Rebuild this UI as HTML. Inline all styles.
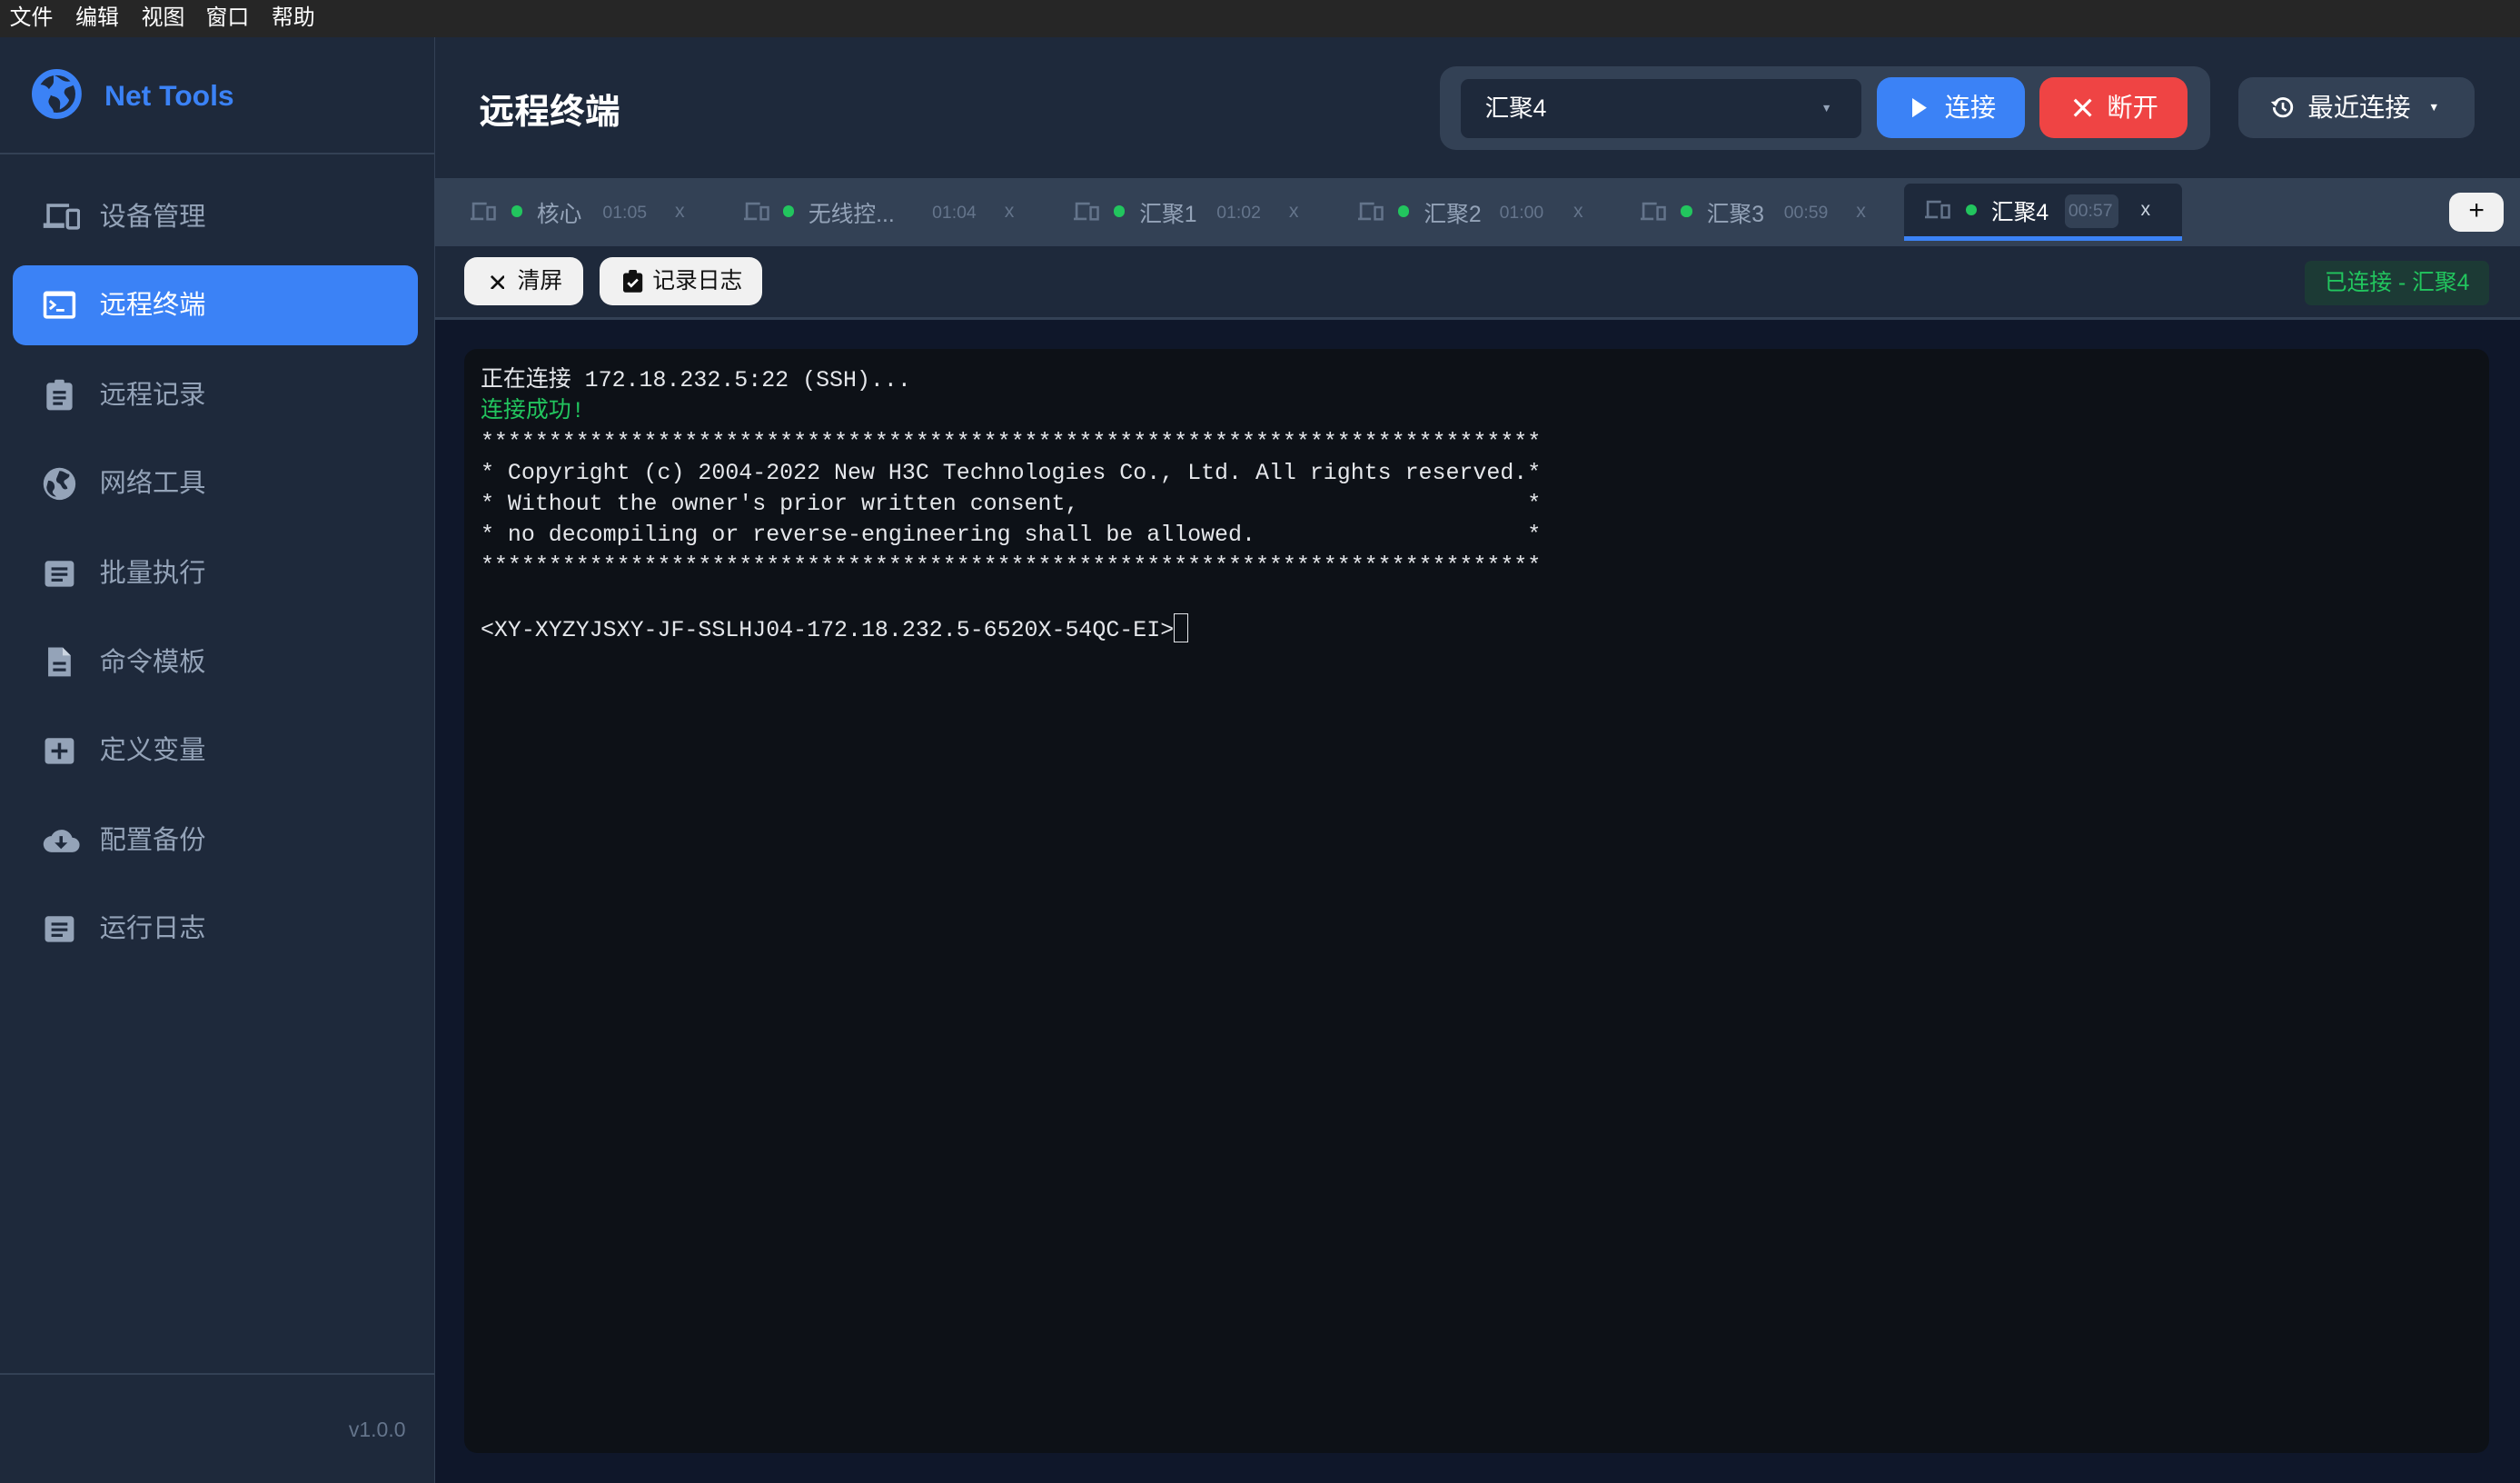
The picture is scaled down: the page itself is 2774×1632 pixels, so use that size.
<!DOCTYPE html>
<html><head><meta charset="utf-8"><style>
html,body{margin:0;padding:0;background:#1e293b;overflow:hidden}
body{width:2774px;height:1632px}
#r{zoom:1.7691;position:relative;width:1568px;height:922.5px;font-family:"Liberation Sans","Noto Sans CJK SC",sans-serif;overflow:hidden;background:#1e293b}
.a{position:absolute}
.menu{left:0;top:0;width:1568px;height:23px;background:#262626;color:#fff;font-size:13.5px;line-height:23px}
.menu span{position:absolute;top:0}
.side{left:0;top:23px;width:270px;height:900px;background:#1e293b;border-right:1px solid #334155}
.nav{position:absolute;left:8px;width:252px;height:50px;border-radius:8px;color:#94a3b8;font-size:16.5px}
.nav .t{position:absolute;left:54px;top:0;line-height:50px}
.nav svg{position:absolute;left:18px;top:14px}
.nav.on{background:#3b82f6;color:#fff}
.dot{width:7px;height:7px;border-radius:50%;background:#22c55e}
.term{font-family:"Liberation Mono","Noto Sans CJK SC",monospace;font-size:14.1px;line-height:19.3px;color:#e5e7eb;white-space:pre}
</style></head><body><div id="r">
<div class="a menu"><span style="left:6px">文件</span><span style="left:47px">编辑</span><span style="left:88px">视图</span><span style="left:128px">窗口</span><span style="left:169px">帮助</span></div>

<div class="a side">
 <div class="a" style="left:0;top:72px;width:270px;height:1px;background:#334155"></div>
 <svg class="a" style="left:20px;top:20px" width="31" height="31" viewBox="0 0 32 32"><circle cx="16" cy="16" r="14" fill="none" stroke="#3b82f6" stroke-width="4"/><path d="M5 10c4 0 6 2 7 5s-2 4-1 7 3 3 3 6c-5-1-10-5-11-11 0-3 1-5 2-7zM14 4c4 1 5 4 9 4 2 0 4-1 5 1-2 3-6 2-7 5-1 2 2 4 3 6-1 3-4 5-6 6 0-3 1-5-1-7s-5-1-6-4 3-4 3-7z" fill="#3b82f6"/></svg>
 <div class="a" style="left:65px;top:26px;font-size:18px;color:#3b82f6;font-weight:bold">Net Tools</div>
 <div class="a" style="left:0;top:831px;width:270px;height:1px;background:#334155"></div>
 <div class="a" style="left:217px;top:859px;font-size:13px;color:#64748b">v1.0.0</div>
</div>

<div class="nav" style="top:110px"><svg width="24" height="22" viewBox="0 0 24 22"><path d="M3 3h14v2H5v10h9v3H1v-3h2z" fill="#94a3b8"/><rect x="16" y="7" width="7" height="11" rx="1" fill="none" stroke="#94a3b8" stroke-width="2"/></svg><span class="t">设备管理</span></div>
<div class="nav on" style="top:165px"><svg width="22" height="22" viewBox="0 0 22 22"><rect x="1" y="2" width="20" height="17" rx="2" fill="#fff"/><rect x="3" y="5" width="16" height="12" fill="#3b82f6"/><path d="M5 8l3 2.5L5 13" stroke="#fff" stroke-width="1.6" fill="none"/><rect x="9" y="13" width="5" height="1.6" fill="#fff"/></svg><span class="t">远程终端</span></div>
<div class="nav" style="top:221px"><svg width="22" height="22" viewBox="0 0 22 22"><rect x="3" y="3" width="16" height="17" rx="2" fill="#94a3b8"/><rect x="8" y="1" width="6" height="4" rx="1" fill="#94a3b8"/><rect x="7" y="8" width="8" height="1.8" fill="#1e293b"/><rect x="7" y="11.5" width="8" height="1.8" fill="#1e293b"/><rect x="7" y="15" width="6" height="1.8" fill="#1e293b"/></svg><span class="t">远程记录</span></div>
<div class="nav" style="top:276px"><svg width="22" height="22" viewBox="0 0 22 22"><circle cx="11" cy="11" r="10" fill="#94a3b8"/><path d="M4 9c3 0 4 2 4 4s-2 2-1 4l2 2c-3 0-6-3-6-6zM11 3c3 0 4 2 6 2 1 2-2 3-3 4-1 2 2 3 2 5-2 1-3 0-4-2s-3-1-3-4z" fill="#1e293b"/></svg><span class="t">网络工具</span></div>
<div class="nav" style="top:332px"><svg width="22" height="22" viewBox="0 0 22 22"><rect x="2" y="3" width="18" height="16" rx="2" fill="#94a3b8"/><rect x="6" y="7" width="10" height="1.8" fill="#1e293b"/><rect x="6" y="10.5" width="10" height="1.8" fill="#1e293b"/><rect x="6" y="14" width="7" height="1.8" fill="#1e293b"/></svg><span class="t">批量执行</span></div>
<div class="nav" style="top:387px"><svg width="22" height="22" viewBox="0 0 22 22"><path d="M4 2h9l5 5v13H4z" fill="#94a3b8"/><path d="M13 2v5h5" fill="#cbd5e1"/><rect x="7" y="11" width="8" height="1.8" fill="#1e293b"/><rect x="7" y="15" width="8" height="1.8" fill="#1e293b"/></svg><span class="t">命令模板</span></div>
<div class="nav" style="top:442px"><svg width="22" height="22" viewBox="0 0 22 22"><rect x="2" y="3" width="18" height="16" rx="2" fill="#94a3b8"/><rect x="6" y="10" width="10" height="2" fill="#1e293b"/><rect x="10" y="6" width="2" height="10" fill="#1e293b"/></svg><span class="t">定义变量</span></div>
<div class="nav" style="top:498px"><svg width="24" height="22" viewBox="0 0 24 22"><path d="M6 18a5 5 0 010-10 7 7 0 0113 1 4.5 4.5 0 010 9z" fill="#94a3b8"/><path d="M11 8h2v4h3l-4 4-4-4h3z" fill="#1e293b"/></svg><span class="t">配置备份</span></div>
<div class="nav" style="top:553px"><svg width="22" height="22" viewBox="0 0 22 22"><rect x="2" y="3" width="18" height="16" rx="2" fill="#94a3b8"/><rect x="6" y="7" width="10" height="1.8" fill="#1e293b"/><rect x="6" y="10.5" width="10" height="1.8" fill="#1e293b"/><rect x="6" y="14" width="7" height="1.8" fill="#1e293b"/></svg><span class="t">运行日志</span></div>

<!-- header -->
<div class="a" style="left:298px;top:52px;font-size:22px;font-weight:bold;color:#fff">远程终端</div>
<div class="a" style="left:896px;top:41px;width:479px;height:52px;background:#334155;border-radius:10px"></div>
<div class="a" style="left:909px;top:49px;width:249px;height:37px;background:#1e293b;border-radius:5px;color:#fff;font-size:15px;line-height:37px"><span style="margin-left:15px">汇聚4</span><span style="position:absolute;right:18px;top:0;font-size:7px;color:#94a3b8">▼</span></div>
<div class="a" style="left:1168px;top:48px;width:92px;height:38px;background:#3b82f6;border-radius:9px;color:#fff;font-size:16px;line-height:38px"><svg class="a" style="left:22px;top:13px" width="9" height="12"><path d="M0 0l9 6-9 6z" fill="#fff"/></svg><span style="position:absolute;left:42px">连接</span></div>
<div class="a" style="left:1269px;top:48px;width:92px;height:38px;background:#ef4444;border-radius:9px;color:#fff;font-size:16px;line-height:38px"><svg class="a" style="left:21px;top:13px" width="12" height="12"><path d="M1 1l10 10M11 1L1 11" stroke="#fff" stroke-width="1.8"/></svg><span style="position:absolute;left:42px">断开</span></div>
<div class="a" style="left:1393px;top:48px;width:147px;height:38px;background:#334155;border-radius:9px;color:#fff;font-size:16px;line-height:38px"><svg class="a" style="left:19px;top:11px" width="16" height="16" viewBox="0 0 16 16"><path d="M3 8a5.5 5.5 0 105.5-5.5A5.5 5.5 0 004 5" fill="none" stroke="#fff" stroke-width="1.6"/><path d="M1 4.5l3 3 2-3.5z" fill="#fff"/><path d="M8.5 5v3.5l2 1.5" fill="none" stroke="#fff" stroke-width="1.5"/></svg><span style="position:absolute;left:43px">最近连接</span><span style="position:absolute;left:118px;font-size:7px">▼</span></div>

<!-- tab bar -->
<div class="a" style="left:271px;top:111px;width:1297px;height:42px;background:#334155"></div>
<div class="a" style="left:1185px;top:114px;width:173px;height:33px;background:#1e293b;border-radius:4px 4px 0 0"></div>
<div class="a" style="left:1185px;top:147px;width:173px;height:3px;background:#3b82f6"></div>
<div class="a" style="left:1285px;top:121px;width:33px;height:21px;background:#334155;border-radius:4px"></div>

<svg class="a" style="left:293px;top:125px" width="16" height="13" viewBox="0 0 16 13"><path d="M1 1h9v1.5H2.5v8H8V12H0v-1.5h1z" fill="#64748b"/><rect x="10.5" y="4" width="4.5" height="7.5" fill="none" stroke="#64748b" stroke-width="1.4"/></svg>
<svg class="a" style="left:463px;top:125px" width="16" height="13" viewBox="0 0 16 13"><path d="M1 1h9v1.5H2.5v8H8V12H0v-1.5h1z" fill="#64748b"/><rect x="10.5" y="4" width="4.5" height="7.5" fill="none" stroke="#64748b" stroke-width="1.4"/></svg>
<svg class="a" style="left:668px;top:125px" width="16" height="13" viewBox="0 0 16 13"><path d="M1 1h9v1.5H2.5v8H8V12H0v-1.5h1z" fill="#64748b"/><rect x="10.5" y="4" width="4.5" height="7.5" fill="none" stroke="#64748b" stroke-width="1.4"/></svg>
<svg class="a" style="left:845px;top:125px" width="16" height="13" viewBox="0 0 16 13"><path d="M1 1h9v1.5H2.5v8H8V12H0v-1.5h1z" fill="#64748b"/><rect x="10.5" y="4" width="4.5" height="7.5" fill="none" stroke="#64748b" stroke-width="1.4"/></svg>
<svg class="a" style="left:1021px;top:125px" width="16" height="13" viewBox="0 0 16 13"><path d="M1 1h9v1.5H2.5v8H8V12H0v-1.5h1z" fill="#64748b"/><rect x="10.5" y="4" width="4.5" height="7.5" fill="none" stroke="#64748b" stroke-width="1.4"/></svg>
<svg class="a" style="left:1198px;top:124px" width="16" height="13" viewBox="0 0 16 13"><path d="M1 1h9v1.5H2.5v8H8V12H0v-1.5h1z" fill="#64748b"/><rect x="10.5" y="4" width="4.5" height="7.5" fill="none" stroke="#64748b" stroke-width="1.4"/></svg>
<div class="a dot" style="left:318px;top:128px"></div><div class="a dot" style="left:487px;top:128px"></div><div class="a dot" style="left:693px;top:128px"></div><div class="a dot" style="left:870px;top:128px"></div><div class="a dot" style="left:1046px;top:128px"></div><div class="a dot" style="left:1223px;top:127px"></div>
<div class="a" style="top:122px;left:334px;font-size:14px;color:#94a3b8">核心</div>
<div class="a" style="top:122px;left:503px;font-size:14px;color:#94a3b8">无线控...</div>
<div class="a" style="top:122px;left:709px;font-size:14px;color:#94a3b8">汇聚1</div>
<div class="a" style="top:122px;left:886px;font-size:14px;color:#94a3b8">汇聚2</div>
<div class="a" style="top:122px;left:1062px;font-size:14px;color:#94a3b8">汇聚3</div>
<div class="a" style="top:121px;left:1239px;font-size:14px;color:#fff">汇聚4</div>
<div class="a" style="top:126px;left:375px;font-size:11px;color:#64748b">01:05</div>
<div class="a" style="top:126px;left:580px;font-size:11px;color:#64748b">01:04</div>
<div class="a" style="top:126px;left:757px;font-size:11px;color:#64748b">01:02</div>
<div class="a" style="top:126px;left:933px;font-size:11px;color:#64748b">01:00</div>
<div class="a" style="top:126px;left:1110px;font-size:11px;color:#64748b">00:59</div>
<div class="a" style="top:125px;left:1287px;font-size:11px;color:#64748b">00:57</div>
<div class="a" style="top:125px;left:420px;font-size:12px;color:#64748b">x</div>
<div class="a" style="top:125px;left:625px;font-size:12px;color:#64748b">x</div>
<div class="a" style="top:125px;left:802px;font-size:12px;color:#64748b">x</div>
<div class="a" style="top:125px;left:979px;font-size:12px;color:#64748b">x</div>
<div class="a" style="top:125px;left:1155px;font-size:12px;color:#64748b">x</div>
<div class="a" style="top:124px;left:1332px;font-size:12px;color:#cbd5e1">x</div>
<div class="a" style="left:1524px;top:120px;width:34px;height:24px;background:#f1f1f1;border-radius:7px;text-align:center;line-height:23px;font-size:17px;color:#111">+</div>

<!-- toolbar -->
<div class="a" style="left:289px;top:160px;width:74px;height:30px;background:#f1f1f1;border-radius:8px;font-size:14px;color:#111;line-height:30px"><svg class="a" style="left:16px;top:11px" width="9" height="9"><path d="M0.5 0.5l8 8M8.5 0.5l-8 8" stroke="#111" stroke-width="1.5"/></svg><span style="position:absolute;left:33px">清屏</span></div>
<div class="a" style="left:373px;top:160px;width:101px;height:30px;background:#f1f1f1;border-radius:8px;font-size:14px;color:#111;line-height:30px"><svg class="a" style="left:15px;top:8px" width="12" height="14" viewBox="0 0 12 14"><rect x="0" y="2" width="12" height="12" rx="1.5" fill="#111"/><rect x="3.5" y="0" width="5" height="3" rx="1" fill="#111"/><path d="M3 8l2 2 4-4" stroke="#fff" stroke-width="1.5" fill="none"/></svg><span style="position:absolute;left:33px">记录日志</span></div>
<div class="a" style="left:1434px;top:162px;width:115px;height:28px;background:#1c3a35;border-radius:4px;color:#22c55e;font-size:14px;line-height:28px;text-align:center">已连接 - 汇聚4</div>
<div class="a" style="left:271px;top:197px;width:1297px;height:2px;background:#334155"></div>

<!-- content -->
<div class="a" style="left:271px;top:199px;width:1297px;height:724px;background:#0f172a"></div>
<div class="a" style="left:289px;top:217px;width:1260px;height:687px;background:#0d1117;border-radius:8px"></div>
<div class="a term" style="left:299px;top:227px">正在连接 172.18.232.5:22 (SSH)...
<span style="color:#22c55e">连接成功!</span>
******************************************************************************
* Copyright (c) 2004-2022 New H3C Technologies Co., Ltd. All rights reserved.*
* Without the owner's prior written consent,                                 *
* no decompiling or reverse-engineering shall be allowed.                    *
******************************************************************************

&lt;XY-XYZYJSXY-JF-SSLHJ04-172.18.232.5-6520X-54QC-EI&gt;<span style="display:inline-block;width:8px;height:17px;border:1px solid #e5e7eb;vertical-align:-4px"></span></div>
</div></body></html>
